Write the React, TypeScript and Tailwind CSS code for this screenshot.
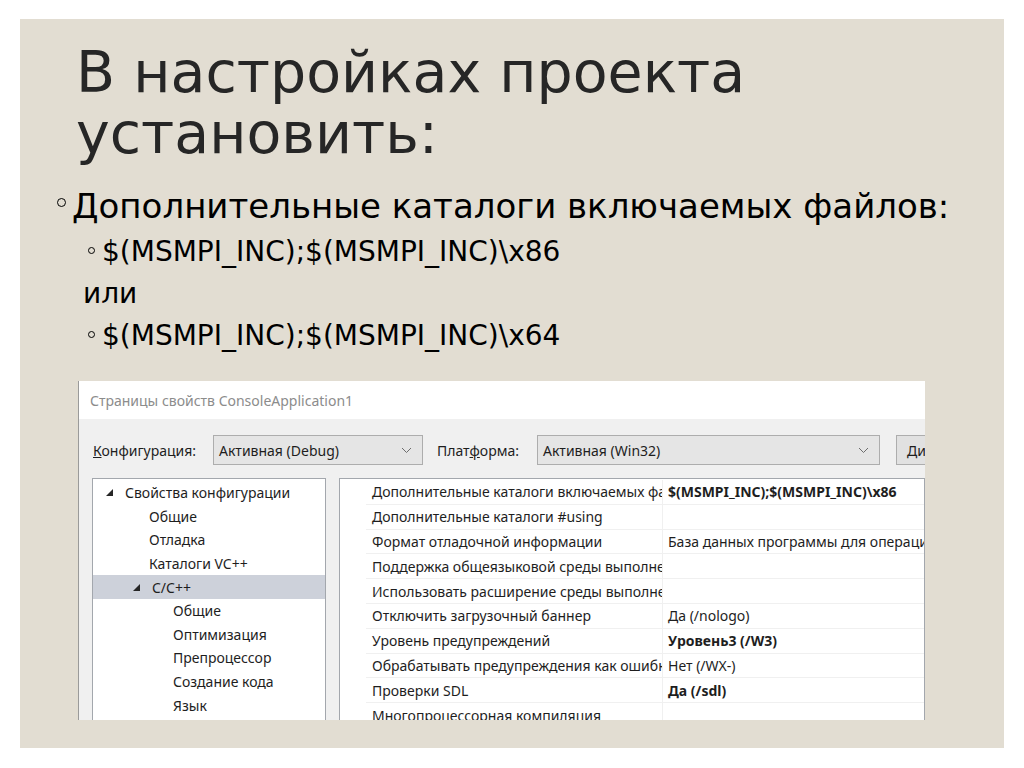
import React from 'react';

const tree = [
  { label: 'Свойства конфигурации', indent: 'pl-[13px]', arrow: true },
  { label: 'Общие', indent: 'pl-[56px]' },
  { label: 'Отладка', indent: 'pl-[56px]' },
  { label: 'Каталоги VC++', indent: 'pl-[56px]' },
  { label: 'C/C++', indent: 'pl-[40px]', arrow: true, selected: true },
  { label: 'Общие', indent: 'pl-[80px]' },
  { label: 'Оптимизация', indent: 'pl-[80px]' },
  { label: 'Препроцессор', indent: 'pl-[80px]' },
  { label: 'Создание кода', indent: 'pl-[80px]' },
  { label: 'Язык', indent: 'pl-[80px]' },
];

const props = [
  { name: 'Дополнительные каталоги включаемых файлов', value: '$(MSMPI_INC);$(MSMPI_INC)\\x86', bold: true },
  { name: 'Дополнительные каталоги #using', value: '' },
  { name: 'Формат отладочной информации', value: 'База данных программы для операций «Изменить и продолжить» (/ZI)' },
  { name: 'Поддержка общеязыковой среды выполнения', value: '' },
  { name: 'Использовать расширение среды выполнения Windows', value: '' },
  { name: 'Отключить загрузочный баннер', value: 'Да (/nologo)' },
  { name: 'Уровень предупреждений', value: 'Уровень3 (/W3)', bold: true },
  { name: 'Обрабатывать предупреждения как ошибки', value: 'Нет (/WX-)' },
  { name: 'Проверки SDL', value: 'Да (/sdl)', bold: true },
  { name: 'Многопроцессорная компиляция', value: '' },
];

function Arrow() {
  return (
    <svg width="7" height="7" viewBox="0 0 7 7" className="shrink-0">
      <path d="M7 0 L7 7 L0 7 Z" fill="#262626" />
    </svg>
  );
}

function Chevron() {
  return (
    <svg width="11" height="7" viewBox="0 0 11 7" className="shrink-0">
      <path d="M1 1 L5.5 5.5 L10 1" fill="none" stroke="#6d6d6d" strokeWidth="1" />
    </svg>
  );
}

function Combo({ text, width }: { text: string; width: string }) {
  return (
    <div className={`${width} shrink-0 h-[30px] flex items-center justify-between pl-[5px] pr-[10px] bg-[#e5e5e5] border border-[#adadad]`}>
      <span>{text}</span>
      <Chevron />
    </div>
  );
}

function PropertyDialog() {
  return (
    <div className="ml-[58px] mt-[24px] w-[847px] h-[339px] overflow-hidden bg-[#f0f0f0] border-l border-[#9a9a9a] font-['Noto_Sans',sans-serif] text-[14px] text-[#1e1e1e]">
      <div className="h-[38px] bg-white flex items-center pl-[11px] text-[14px] text-[#8c8c8c]">
        Страницы свойств ConsoleApplication1
      </div>
      <div className="mt-[16px] h-[30px] flex items-center whitespace-nowrap">
        <span className="ml-[14px] w-[120px] shrink-0">
          <span className="underline">К</span>онфигурация:
        </span>
        <Combo text="Активная (Debug)" width="w-[210px]" />
        <span className="ml-[14px] w-[100px] shrink-0">
          Плат<span className="underline">ф</span>орма:
        </span>
        <Combo text="Активная (Win32)" width="w-[343px]" />
        <div className="ml-[16px] h-[30px] w-[90px] shrink-0 flex items-center pl-[10px] bg-[#e1e1e1] border border-[#adadad]">
          <span className="underline">Д</span>испетчер
        </div>
      </div>
      <div className="mt-[13px] flex items-start">
        <div className="ml-[13px] w-[234px] shrink-0 h-[260px] bg-white border border-[#a3a7ad] pt-[2px] whitespace-nowrap">
          {tree.map((t, i) => (
            <div
              key={i}
              className={`h-[23.6px] flex items-center gap-[12px] ${t.indent} ${t.selected ? 'bg-[#cdd1da]' : ''}`}
            >
              {t.arrow && <Arrow />}
              <span>{t.label}</span>
            </div>
          ))}
        </div>
        <div className="ml-[13px] flex-1 min-w-0 h-[260px] bg-white border border-[#a3a7ad] pt-[1px]">
          {props.map((p, i) => (
            <div key={i} className="h-[24.8px] flex">
              <div className="w-[26px] shrink-0" />
              <div className="w-[297px] shrink-0 flex items-center pl-[6px] border-b border-r border-[#f0f0f0] whitespace-nowrap overflow-hidden">
                {p.name}
              </div>
              <div className={`flex-1 min-w-0 flex items-center pl-[5px] border-b border-[#f0f0f0] whitespace-nowrap overflow-hidden ${p.bold ? 'font-bold' : ''}`}>
                {p.value}
              </div>
            </div>
          ))}
        </div>
      </div>
    </div>
  );
}

function Bullet({ size }: { size: string }) {
  return <span className={`${size} shrink-0 rounded-full border border-black`} />;
}

export default function App() {
  return (
    <div className="w-[1024px] h-[768px] bg-white pt-[19px] pl-[20px] overflow-hidden">
      <div className="w-[984px] h-[729px] bg-[#e2ddd2] pt-[23px] font-['DejaVu_Sans',sans-serif]">
        <h1 className="pl-[56px] text-[57px] leading-[61px] text-[#262626] font-normal">
          В настройках проекта
          <br />
          установить:
        </h1>
        <div className="mt-[22px] pl-[37px] h-[40px] text-[34px] leading-[40px] text-black flex items-center gap-[6px] whitespace-nowrap">
          <Bullet size="w-[9px] h-[9px] -mt-[8px]" />
          <span>Дополнительные каталоги включаемых файлов:</span>
        </div>
        <div className="mt-[5px] pl-[68px] h-[42px] text-[28px] leading-[42px] text-black flex items-center gap-[7px] whitespace-nowrap">
          <Bullet size="w-[7px] h-[7px] -mt-[3px]" />
          <span>$(MSMPI_INC);$(MSMPI_INC)\x86</span>
        </div>
        <div className="pl-[63px] h-[42px] text-[28px] leading-[42px] text-black">или</div>
        <div className="pl-[68px] h-[42px] text-[28px] leading-[42px] text-black flex items-center gap-[7px] whitespace-nowrap">
          <Bullet size="w-[7px] h-[7px] -mt-[3px]" />
          <span>$(MSMPI_INC);$(MSMPI_INC)\x64</span>
        </div>
        <PropertyDialog />
      </div>
    </div>
  );
}
